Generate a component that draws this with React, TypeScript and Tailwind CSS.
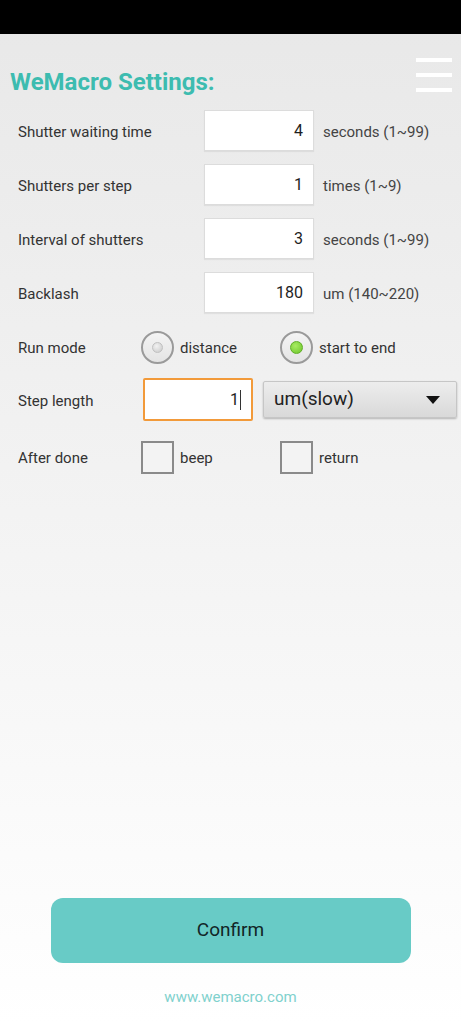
import React from 'react';

const font = { fontFamily: 'Roboto, "Noto Sans", sans-serif' };

function NumBox({ value, focused }: { value: string; focused?: boolean }) {
  return (
    <div
      className={`w-[110px] h-full bg-white flex items-center justify-end pr-[10px] text-[16px] text-[#1e1e1e] ${
        focused
          ? 'border-2 border-[#f29a3a] rounded-[2px] pr-[10px]'
          : 'border border-[#dcdcdc] shadow-[0_1px_1px_rgba(0,0,0,0.06)]'
      }`}
    >
      {value}
      {focused && <span className="w-[1px] h-[20px] bg-[#333] ml-[1px]" />}
    </div>
  );
}

function Radio({ checked }: { checked?: boolean }) {
  return (
    <div className="w-[33px] h-[33px] rounded-full border-2 border-[#9a9a9a] bg-gradient-to-b from-[#f4f4f4] to-[#e4e4e4] flex items-center justify-center">
      {checked ? (
        <div className="w-[13px] h-[13px] rounded-full bg-[radial-gradient(circle_at_40%_35%,#a8ec62,#6cc52a)] border border-[#5fae25]" />
      ) : (
        <div className="w-[11px] h-[11px] rounded-full bg-[radial-gradient(circle_at_40%_35%,#f2f2f2,#c8c8c8)] border border-[#c0c0c0]" />
      )}
    </div>
  );
}

function Check() {
  return <div className="w-[33px] h-[33px] border-2 border-[#8a8a8a] bg-[#f3f3f3]" />;
}

const rows = [
  { label: 'Shutter waiting time', value: '4', unit: 'seconds (1~99)' },
  { label: 'Shutters per step', value: '1', unit: 'times (1~9)' },
  { label: 'Interval of shutters', value: '3', unit: 'seconds (1~99)' },
  { label: 'Backlash', value: '180', unit: 'um (140~220)' },
];

export default function App() {
  return (
    <div
      className="min-h-[1024px] flex flex-col bg-gradient-to-b from-[#e8e8e8] via-[#f3f3f3] to-[#ffffff]"
      style={font}
    >
      <div className="h-[34px] bg-black" />

      {/* header */}
      <div className="h-[70px] flex justify-between">
        <h1 className="mt-[33px] ml-[10px] text-[24px] leading-[30px] font-bold text-[#3dbcb0]">
          WeMacro Settings:
        </h1>
        <div className="mt-[24px] mr-[9px] w-[36px] flex flex-col gap-[11px]">
          <div className="h-[4px] bg-white" />
          <div className="h-[4px] bg-white" />
          <div className="h-[4px] bg-white" />
        </div>
      </div>

      {/* numeric settings */}
      <div className="mt-[6px] flex flex-col gap-[13px] text-[15px] text-[#333]">
        {rows.map((r) => (
          <div key={r.label} className="h-[41px] flex items-center pl-[18px]">
            <span className="w-[186px] pt-[3px]">{r.label}</span>
            <NumBox value={r.value} />
            <span className="ml-[9px] pt-[3px] text-[#444]">{r.unit}</span>
          </div>
        ))}
      </div>

      {/* run mode */}
      <div className="mt-[18px] h-[33px] flex items-center pl-[18px] text-[15px] text-[#333]">
        <span className="w-[123px] pt-[2px]">Run mode</span>
        <Radio />
        <span className="ml-[6px] w-[100px] pt-[2px]">distance</span>
        <Radio checked />
        <span className="ml-[6px] pt-[2px]">start to end</span>
      </div>

      {/* step length */}
      <div className="mt-[14px] h-[43px] flex items-center pl-[18px] text-[15px] text-[#333]">
        <span className="w-[125px] pt-[3px]">Step length</span>
        <NumBox value="1" focused />
        <div className="ml-[10px] w-[194px] h-[37px] flex items-center justify-between pl-[10px] pr-[16px] border border-[#c6c6c6] rounded-[2px] bg-gradient-to-b from-[#ededed] to-[#d9d9d9] shadow-[0_1px_2px_rgba(0,0,0,0.25)]">
          <span className="text-[19px] text-[#222]">um(slow)</span>
          <svg width="14" height="8" viewBox="0 0 14 8">
            <path d="M0 0 L14 0 L7 8 Z" fill="#111" />
          </svg>
        </div>
      </div>

      {/* after done */}
      <div className="mt-[20px] h-[33px] flex items-center pl-[18px] text-[15px] text-[#333]">
        <span className="w-[123px] pt-[2px]">After done</span>
        <Check />
        <span className="ml-[6px] w-[100px] pt-[2px]">beep</span>
        <Check />
        <span className="ml-[6px] pt-[2px]">return</span>
      </div>

      <div className="flex-1" />

      <div className="flex justify-center">
        <button className="w-[360px] h-[65px] rounded-[12px] bg-[#68cbc6] text-[19px] text-[#122626]">
          Confirm
        </button>
      </div>
      <div className="mt-[24px] mb-[17px] h-[20px] text-center text-[15px] leading-[20px] text-[#80d1cd]">
        www.wemacro.com
      </div>
    </div>
  );
}
